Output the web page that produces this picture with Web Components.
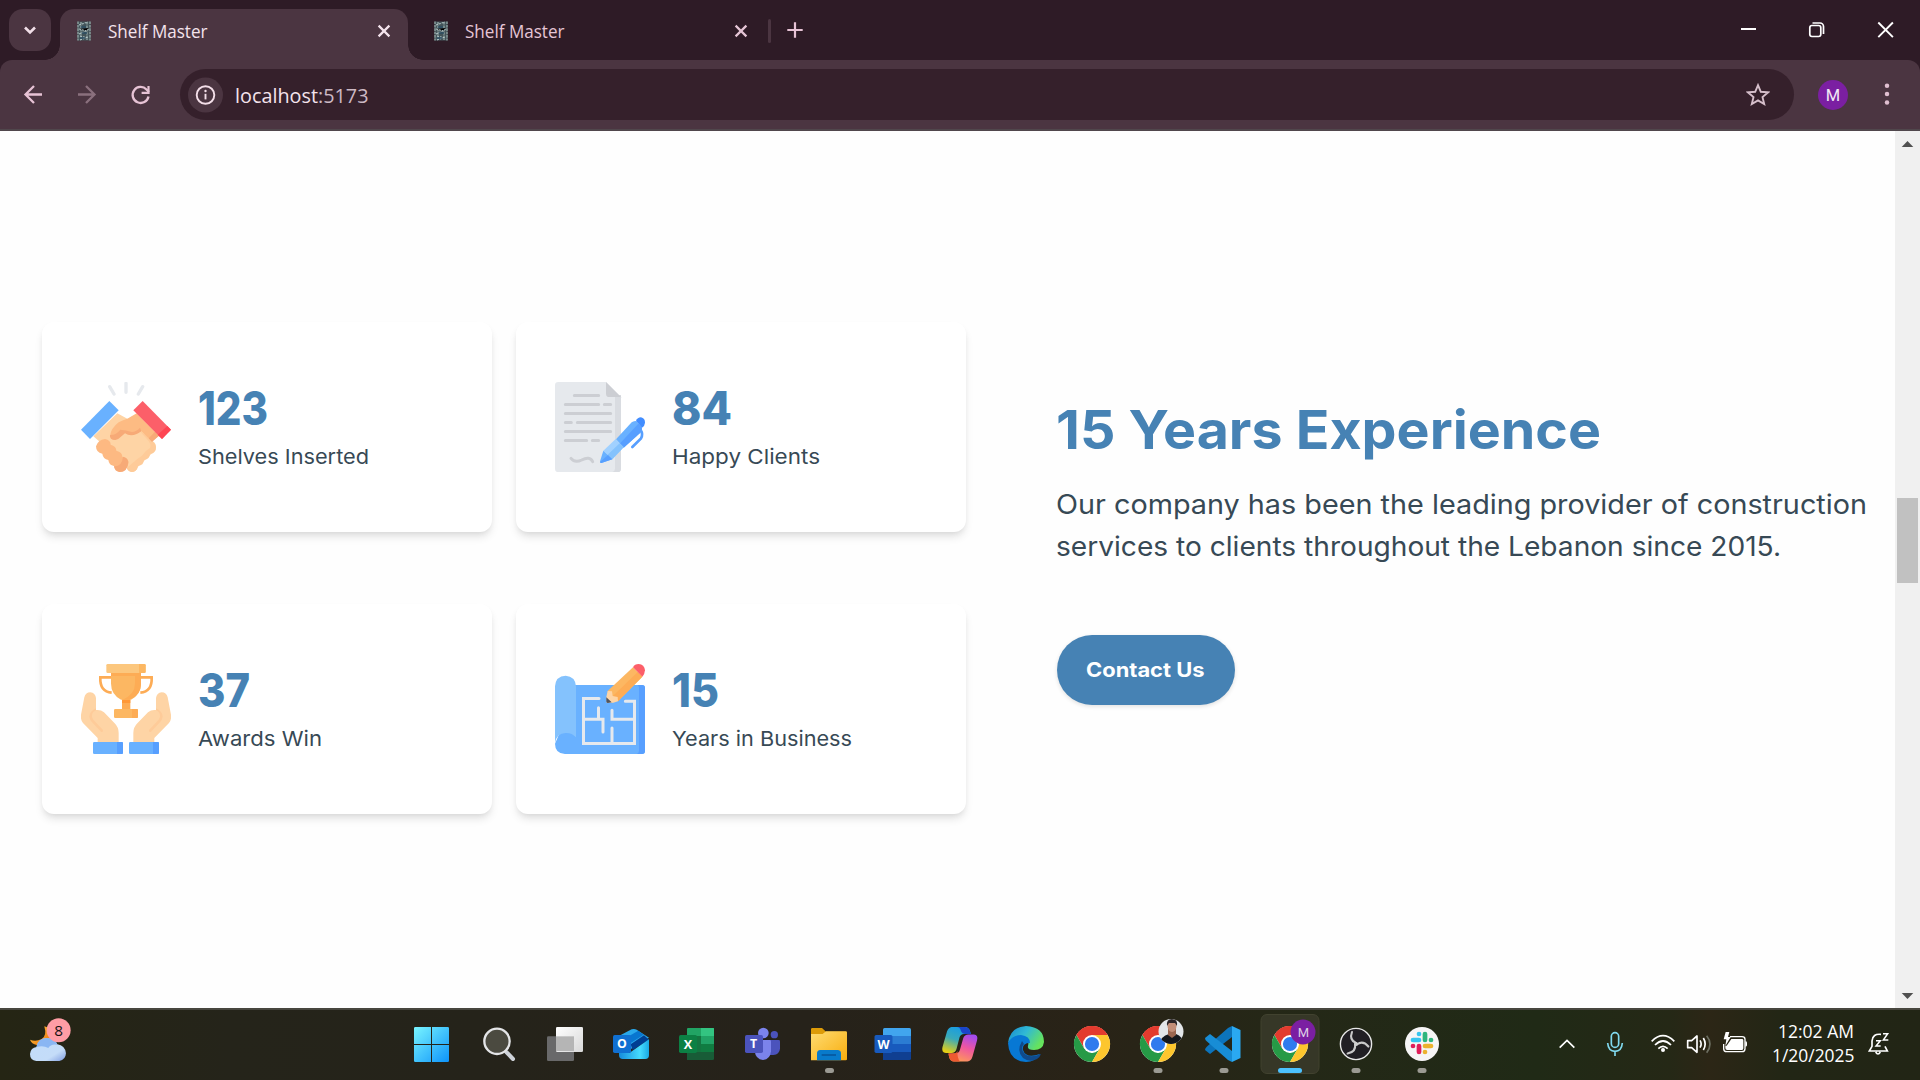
<!DOCTYPE html>
<html lang="en">
<head>
<meta charset="utf-8">
<title>Shelf Master</title>
<style>
html,body{margin:0;height:100%;overflow:hidden}
body{font-family:"Open Sans","Noto Sans",sans-serif;background:#fff}
</style>
</head>
<body>
<desktop-screen></desktop-screen>
<script>
const CHROME = `<circle cx="33" cy="36" r="18" fill="#fff"/>
<path d="M33 36 17.4 27A18 18 0 0 1 48.6 27Z" fill="#e33b2e"/><path d="M17.4 27A18 18 0 0 1 48.6 27H33L25.2 40.5Z" fill="#e33b2e"/>
<path d="M17.4 27A18 18 0 0 0 33 54L40.8 40.5 33 45 25.2 40.5Z" fill="#269a46"/>
<path d="M48.6 27A18 18 0 0 1 33 54L40.8 40.5 41 32 33 27Z" fill="#fdc62e"/>
<circle cx="33" cy="36" r="9" fill="#fff"/><circle cx="33" cy="36" r="7.1" fill="#2f7bee"/>`;
const DOT = '<rect x="28.5" y="60" width="9" height="5" rx="2.5" fill="#9b9a93"/>';
const ICONS = {
 chevdown:['0 0 42 42','<path d="m16 18.5 5 5 5-5" fill="none" stroke="#f1dfe8" stroke-width="2.6"/>'],
 shelf:['0 0 16 22','<rect x="1.5" y="1.5" width="13" height="19" fill="#435459"/><path d="M2 1.5v19M14 1.5v19M5 2v18M11 2v18" stroke="#8da09f" stroke-width="1.4" stroke-dasharray="2.6 .8"/><path d="m3 5 9-3M3 9l8 2 2-3M3 14l9-4M4 16l8 2M4 20l8-3" stroke="#b2c5c6" stroke-width="1.1" stroke-dasharray="2 1"/><path d="M5 7h5M6 13h5M4 18h5" stroke="#2d4d63" stroke-width="1.4"/>'],
 x:['0 0 18 18','<path d="m3.6 3.6 10.8 10.8m0-10.8L3.6 14.4" stroke="currentColor" stroke-width="2.2"/>'],
 plus:['0 0 18 18','<path d="M9 1.3v15.4M1.3 9h15.4" stroke="#e7c3d5" stroke-width="2.2"/>'],
 min:['0 0 69 60','<path d="M28 29h15" stroke="#fff" stroke-width="2"/>'],
 restore:['0 0 69 60','<g fill="none" stroke="#fff" stroke-width="1.7"><rect x="27.800" y="25.5" width="11" height="11" rx="2.2"/><path d="M30.500 23h7.5a3.5 3.5 0 0 1 3.5 3.5V34"/></g>'],
 close:['0 0 69 60','<path d="m27.3 22.5 14.6 14.6m0-14.6L27.3 37.1" stroke="#fff" stroke-width="1.9"/>'],
 back:['0 0 54 51','<path d="M42 25.5H26M34 17l-8.5 8.500L34 34" fill="none" stroke="#e7c3d5" stroke-width="2.3"/>'],
 fwd:['0 0 54 51','<path d="M24 25.500h16M32 17l8.500 8.500L32 34" fill="none" stroke="#8a707d" stroke-width="2.300"/>'],
 reload:['0 0 54 51','<path d="M40.5 27.500a8 8 0 1 1-2-7l2.500 2.500" fill="none" stroke="#e7c3d5" stroke-width="2.300"/><path d="M41.600 17v8h-8v-2.200h5.800V17z" fill="#e7c3d5"/>'],
 info:['0 0 36 36','<circle cx="18.500" cy="18" r="17.500" fill="#4b3541"/><circle cx="18.500" cy="18" r="8.800" fill="none" stroke="#f4dfe9" stroke-width="1.900"/><path d="M18.500 16.800v5.600" stroke="#f4dfe9" stroke-width="1.900"/><circle cx="18.500" cy="14" r="1.200" fill="#f4dfe9"/>'],
 star:['0 0 24 24','<path d="m12 2.200 2.800 6.600 7.200.600-5.500 4.700 1.700 7L12 17.400 5.800 21.100l1.700-7L2 9.400l7.200-.6z" fill="none" stroke="#d6bfcb" stroke-width="1.900"/>'],
 dots:['0 0 24 24','<g fill="#e0bfd0"><circle cx="12" cy="3.800" r="2.250"/><circle cx="12" cy="12" r="2.250"/><circle cx="12" cy="20.400" r="2.250"/></g>'],
 up:['0 0 25 26','<path d="m12.500 10 5.800 6H6.700z" fill="#505050"/>'],
 down:['0 0 25 26','<path d="m12.500 17 5.800-6H6.700z" fill="#505050"/>'],
 hands:['123 216 270 270',`<g stroke="#e6e9ed" stroke-width="10" stroke-linecap="round"><path d="m209 230 13 22M258 220v27M308 230l-13 22"/></g>
<path d="M232 310 160 379 180 396 258 466Q262 486 276 486 290 484 294 470L346 420Q352 398 335 392L300 340 262 326Z" fill="#fed4a5"/>
<path d="M298 362Q318 372 334 394 352 402 347 420 342 432 330 431 330 447 312 450 311 466 294 468 290 486 275 486 264 484 260 474L284 454Q292 446 306 437 318 420 330 414 336 402 320 386Z" fill="#fecb99"/>
<path d="M290 310 357 377 335 394 303 362Q282 382 250 366L234 385Q218 394 210 378 212 356 236 337 250 330 262 326Z" fill="#fdbb83"/>
<path d="M210 375Q208 390 226 390 234 390 241 382L255 370Q276 384 304 364L300 353Q290 365 275 366 258 360 241 359 228 376 210 375M345 365 357 377 336 396 326 385Z" fill="#f7aa77"/>
<path d="M168 409Q174 389 195 387 212 390 212 404 229 409 229 422 247 427 247 440 268 445 265 461 258 486 239 486 224 484 222 468 207 466 205 450 189 447 187 431 168 428 168 409Z" fill="#fdb982"/>
<path d="M265 456Q263 486 239 486 224 484 222 469 246 470 249 440 263 443 265 456Z" fill="#f7aa77"/>
<path d="m208 273 28 28-86 86-27-28z" fill="#69b1ff"/><path d="m308 273 85 86-27 28-86-86z" fill="#fc5f69"/><path d="m382 348 11 11-27 28-13-13z" fill="#fe4553"/>`],
 paper:['165 216 270 270',`<path d="M175 216h143l45 46v214q0 10-10 10H175q-10 0-10-10V226q0-10 10-10" fill="#e6e9ed"/><path d="M345 255h18v221q0 10-10 10h-16q8-3 8-10z" fill="#d9dce1"/><path d="m318 216 45 45h-35q-10 0-10-10z" fill="#ccced3"/>
<path d="M223 256.500h73M196 283.500h100M313 283.500h19M196 310.500h136M196 337.500h18M232 337.500h100M196 364.500h136M196 391.500h64M277 391.500h19M213 445q12 15 32 5 24-13 33 5" stroke="#ccced3" stroke-width="9" stroke-linecap="round" fill="none"/>
<path d="m422 360q8 13 1 25l-26 26" fill="none" stroke="#579fff" stroke-width="8" stroke-linecap="round"/>
<path d="m395 337q7-4 13-4l18 20q0 9-5 15l-50 45-23-25z" fill="#69b1ff"/><path d="m415 341 11 12q0 9-5 15l-50 45-12-12z" fill="#579fff"/><path d="m408 333q4-11 15-11 12 3 12 16-1 10-9 15z" fill="#428dff"/>
<path d="m347 387 24 25-34 36-27-26z" fill="#a1d1ff"/><path d="m359 400 12 12-34 36-14-14z" fill="#84c2fd"/><path d="m310 422 27 26-33 11q-6-1-3-8z" fill="#69b1ff"/><path d="m324 435 13 13-33 11q-4 0-4-3z" fill="#579fff"/>`],
 trophy:['123 192 270 270',`<path d="M214 232h-33q-2 43 34 46m87-46h33q2 43-34 46" fill="none" stroke="#fdac55" stroke-width="8"/><path d="M246 290h25v40h-25z" fill="#fdac55"/><path d="M246 300h25v9h-25z" fill="#ff9838"/>
<path d="M213 215h90v35q0 34-30 49h-30q-30-15-30-49z" fill="#fcb762"/><path d="M285 215h18v35q0 37-36 49h-19q37-15 37-49z" fill="#fdac55"/><path d="M213 218h90v10h-90z" fill="#fdac55"/>
<rect x="199" y="192" width="118" height="27" rx="4" fill="#fcc77e"/><path d="M297 192h16q4 0 4 4v19q0 4-4 4h-16z" fill="#fcb762"/><rect x="222" y="327" width="72" height="27" rx="4" fill="#fcb762"/><path d="M276 327h14q4 0 4 4v19q0 4-4 4h-14z" fill="#fdac55"/>
<g id="h"><path d="M133 292q4-15 18-15 15 2 17 17v36q14-2 24 7l32 33q12 12 12 29v28h-63v-13l-44-45q-8-9-6-25z" fill="#fed4a5"/><path d="M168 325q-20 10-20 25 2 11 8 17l27 28q7 3 6-5l-29-31q-12-18 8-29z" fill="#fecb99"/></g><use href="#h" transform="matrix(-1 0 0 1 516 0)"/>
<rect x="159" y="426" width="90" height="36" rx="4" fill="#69b1ff"/><rect x="267" y="426" width="90" height="36" rx="4" fill="#69b1ff"/><path d="M231 426h14q4 0 4 4v28q0 4-4 4h-14zM339 426h14q4 0 4 4v28q0 4-4 4h-14z" fill="#579fff"/>`],
 plan:['165 192 270 270',`<path d="M215 255h211q9 0 9 9v189q0 9-9 9H195q-30-2-30-31l30-70z" fill="#69b1ff"/><path d="M413 255h13q9 0 9 9v189q0 9-9 9h-16q7-3 7-10V263q0-5-4-8" fill="#579fff"/>
<path d="M165 259q2-31 32-32 29 2 31 32v153q-13-14-31-13-27 0-32 30z" fill="#84c2fd"/>
<path d="M297 295.500H250.500v135h153V304H376M250.500 358h58.500v38M295.500 323v35M336 331v27h66M336 384v46" fill="none" stroke="#e6e9ed" stroke-width="9" stroke-linecap="round"/>
<path d="m399 202 28 28-73 74-32-30z" fill="#fcb762"/><path d="m413 216 14 14-73 74-16-15z" fill="#fdac55"/><path d="m399 202q5-10 17-10 17 1 19 19-1 12-8 19z" fill="#fc5f69"/><path d="m323 273 13 1 2 14 15 3 1 13-14 4-20 1-1-18z" fill="#fed4a5"/><path d="m319 292 16 15-12 2q-4 0-4-5z" fill="#51555f"/>`],
 weather:['66 24 160 216',`<defs><linearGradient id="m" y2="1"><stop stop-color="#ffc83d"/><stop offset="1" stop-color="#ec7211"/></linearGradient><linearGradient id="c" y2="1"><stop stop-color="#c2dcfa"/><stop offset=".7" stop-color="#c4dcf8"/><stop offset="1" stop-color="#7f9ce0"/></linearGradient></defs><path d="M133 79q9 30-9 39-18 8-34 1 5 13 20 16h40V85z" fill="url(#m)"/><path d="M109 183q-19-2-19-21 2-19 20-21 5-26 32-27 23 2 30 19 23 3 26 27-1 20-20 23z" fill="url(#c)"/><path d="M109 141q4-27 33-27 24 1 30 20-20-3-27 10-15-9-36-3" fill="#8ab6f3"/><circle cx="176" cy="91" r="36" fill="#ff9da5"/><text x="176" y="107" text-anchor="middle" font-size="46" font-family="Open Sans" fill="#171313">8</text>`],
 start:['57 9 198 216','<defs><linearGradient id="g" x2="1" y2="1" gradientUnits="userSpaceOnUse" gradientTransform="translate(102 66) scale(105)"><stop stop-color="#79f5ff"/><stop offset="1" stop-color="#0d93fa"/></linearGradient></defs><path d="M106 66h47v51h-51V70q0-4 4-4m50 0h47q4 0 4 4v47h-51zm-54 54h51v51h-47q-4 0-4-4zm54 0h51v47q0 4-4 4h-47z" fill="url(#g)"/>'],
 search:['255 9 198 216','<path d="m379 141 20 21" stroke="#ced2d8" stroke-width="12" stroke-linecap="round"/><circle cx="351" cy="109" r="38" fill="#4b4a40" stroke="#e4e5e7" stroke-width="7"/>'],
 view:['453 9 198 216','<defs><linearGradient id="v" x2="1" y2="1"><stop stop-color="#fff"/><stop offset="1" stop-color="#d8d8d8"/></linearGradient></defs><rect x="501" y="94" width="81" height="74" rx="4" fill="#69696a"/><rect x="528" y="66" width="81" height="75" rx="4" fill="url(#v)"/><path d="M528 94h54v44h-54z" fill="#b5b5b5"/>'],
 outlook:['651 9 198 216','<defs><linearGradient id="o" x2="1"><stop stop-color="#158bdc"/><stop offset=".7" stop-color="#46dcff"/><stop offset="1" stop-color="#19a9e4"/></linearGradient></defs><path d="m718 92 37-19q8-3 15 1l37 24-70 44z" fill="#29a8ec"/><path d="m733 101 42-24 16 12-40 26z" fill="#0876d0"/><path d="m752 118 40-27 15 13-49 31z" fill="#003e92"/><path d="m807 103v48q0 11-11 11h-68q-11 0-11-11v-8h32z" fill="url(#o)"/><rect x="699" y="90" width="54" height="54" rx="5" fill="#1070d2"/><text x="726" y="130" text-anchor="middle" font-family="Open Sans" font-weight="700" font-size="37" fill="#fff">O</text>'],
 excel:['849 9 198 216','<path d="M924 69h78v24h-81V72q0-3 3-3" fill="#21a464"/><path d="M963 69h36q3 0 3 3v21h-39z" fill="#33c481"/><path d="M921 93h81v24h-81z" fill="#21a366"/><path d="M921 117h81v24h-81z" fill="#107c41"/><path d="M921 141h81v20q0 4-4 4h-77z" fill="#185c37"/><path d="M921 93h42v48h-42z" fill="#147540"/><rect x="897" y="90" width="54" height="54" rx="5" fill="#0c8044"/><text x="924" y="131" text-anchor="middle" font-family="Open Sans" font-weight="700" font-size="38" fill="#fff">X</text>'],
 teams:['1047 9 198 216','<circle cx="1183" cy="89" r="11" fill="#4b53bc"/><path d="M1165 105h31q4 0 4 4v22q-2 18-20 19h-15z" fill="#4b53bc"/><circle cx="1150" cy="84" r="16" fill="#7b83eb"/><path d="M1124 105h45q4 0 4 4v30q-2 24-24 26-22-2-25-26z" fill="#7b83eb"/><rect x="1095" y="90" width="54" height="54" rx="5" fill="#4b53bc"/><text x="1121" y="130" text-anchor="middle" font-family="Open Sans" font-weight="700" font-size="37" fill="#fff">T</text>'],
 files:['1245 9 198 216','<defs><linearGradient id="f" x2="1" y2="1"><stop stop-color="#ffdc72"/><stop offset="1" stop-color="#f8ad0d"/></linearGradient></defs><path d="M1297 69h29l12 11h59q4 0 4 4v20h-108V73q0-4 4-4" fill="#dd9b08"/><path d="M1293 87h35l10-8h59q4 0 4 4v80q0 3-4 3h-104z" fill="url(#f)"/><path d="M1311 166v-20q0-11 10-11h52q10 0 10 11v20z" fill="#087acb"/><path d="M1325 150h43" stroke="#074f93" stroke-width="4"/><rect x="1335" y="189" width="27" height="15" rx="7.500" fill="#9b9a93"/>'],
 word:['1.5 0 66 72','<path d="M25 20h25q1.500 0 1.500 1.500V28h-28v-6.500Q23.500 20 25 20" fill="#41a5ee"/><path d="M23.500 28h28v8h-28z" fill="#2b7cd3"/><path d="M23.500 36h28v8h-28z" fill="#185abd"/><path d="M23.500 44h28v6.500q0 1.500-1.500 1.500H23.500z" fill="#103f91"/><rect x="15" y="27" width="18" height="18" rx="1.700" fill="#185abd"/><text x="24" y="40.500" text-anchor="middle" font-family="Open Sans" font-weight="700" font-size="12.500" fill="#fff">W</text>'],
 copilot:['0 0 66 72','<defs><linearGradient id="a" x1=".7" x2=".3" y2="1"><stop stop-color="#159be7"/><stop offset=".5" stop-color="#39aaba"/><stop offset="1" stop-color="#e4ce16"/></linearGradient><linearGradient id="b" x1=".7" x2=".3" y2="1"><stop stop-color="#a24bef"/><stop offset=".45" stop-color="#ef56a0"/><stop offset="1" stop-color="#ff9d54"/></linearGradient></defs><path d="M24.500 19H38q3.500 0 4.800 3.500L44 26h-7q-3.500 0-4.500 3.500L29.500 41q-1.200 4-5 4H19q-5-.5-3.500-6L20 23.500q1.300-4 4.500-4.500z" fill="url(#a)"/><path d="M32 19h6q3.500 0 4.800 3.500L44 26h-5.500q-3.500 0-4.500-3-1-4-4-4z" fill="#1b45c9"/><path d="M47 27q4.500.5 3 6l-4.500 16q-1.300 4.500-5 5H27q-3.500 0-4.800-4L21.500 46H28q4 0 5-4l3.300-11.500Q37.500 27 41.500 27z" fill="url(#b)" transform="translate(0 -.5)"/><path d="M21.500 45.500H26q3.500 0 4.500-2.500-.5 7 2.500 10.500h-6q-3.500 0-4.800-4z" fill="#ee5931"/>'],
 edge:['0 0 66 72','<defs><linearGradient id="e" x2="1" y2=".5"><stop stop-color="#1687cd"/><stop offset=".5" stop-color="#30b9d5"/><stop offset="1" stop-color="#66e35d"/></linearGradient></defs><path d="M15 35Q17 19 33 18 51 19 51 34q-1 8-10 8-7 0-6-4 2-9-7-9-9 0-13 6" fill="url(#e)"/><path d="M15 35q4-8 13-8 9 1 9 8-8 0-7 7 3 9 17 4-5 8-14 8-17-1-18-19" fill="#0778d4"/><path d="M29 33q-6 10 1 17 7 5 14 1 3-2 4-5-12 5-17-1-4-5 0-9z" fill="#104a8b"/>'],
 chrome:['0 0 66 72',CHROME],
 chromea:['0 0 66 72',CHROME+DOT+'<defs><clipPath id="p"><circle cx="46" cy="23.500" r="12.500"/></clipPath></defs><g clip-path="url(#p)"><path d="M30 8h32v34H30z" fill="#e3e6e9"/><path d="M34 39q0-10 10-13h7q8 3 8 13z" fill="#15181d"/><path d="M43 19h8v8l-4 3-4-3z" fill="#9b6650"/><ellipse cx="47" cy="18" rx="4.500" ry="6" fill="#c28e78"/><path d="M42 18q-1-7 5-7t5 7l-2-3h-6z" fill="#292326"/></g>'],
 code:['0 0 66 72','<path d="M41 18v11L19 46l-5-4q0-2 2-3.500L37 20z" fill="#0c74bc"/><path d="M41 54V43L19 26l-5 4q0 2 2 3.500L37 52z" fill="#188dd6"/><path d="m41 18 8.500 4v28L41 54z" fill="#2aa9f2"/>'+DOT],
 chromem:['0 0 66 72','<rect x="4" y="6.500" width="58" height="59" rx="6" fill="#363727" stroke="#41422f"/>'+CHROME+'<circle cx="46" cy="24" r="12.500" fill="#7b1fa2"/><text x="46.500" y="28.500" text-anchor="middle" font-family="Roboto" font-size="13" fill="#ded0e5">M</text><rect x="21" y="60" width="24" height="5" rx="2.500" fill="#4cc2ff"/>'],
 obs:['0 0 66 72','<circle cx="33" cy="36" r="15.600" fill="#211f24" stroke="#e8e8e8" stroke-width="1.400"/><g fill="none" stroke="#c9c9c9" stroke-width="2.100" stroke-linecap="round"><g id="s"><path d="M33 35q-7-3-4-11"/></g><use href="#s" transform="rotate(120 33 36)"/><use href="#s" transform="rotate(240 33 36)"/></g><circle cx="33" cy="36" r="2" fill="#d0d0d0"/>'+DOT],
 slack:['0 0 66 72','<circle cx="33" cy="36" r="17" fill="#f6f5f6"/><g stroke-width="4.700" stroke-linecap="round"><path d="M30 26v.01M24 32h6" stroke="#36c5f0"/><path d="M36 26v6M42 32v.01" stroke="#2eb67d"/><path d="M36 38h6M36 44v.01" stroke="#ecb22e"/><path d="M30 38v6M24 38v.01" stroke="#e01e5a"/></g>'+DOT],
 tchev:['69 24 144 216','<path d="m119 143 22-22 22 22" fill="none" stroke="#fff" stroke-width="5"/>'],
 mic:['213 24 144 216','<g fill="none" stroke="#80d9ee" stroke-width="5"><rect x="274" y="98" width="22" height="44" rx="11"/><path d="M263 129q2 25 22 25t22-25M285 154v14"/></g>'],
 wifi:['357 24 126 216','<g fill="none" stroke="#fff" stroke-width="5"><path d="M395 124q34-34 68 0M405 135q24-24 48 0M415 146q14-14 28 0"/></g><circle cx="429" cy="150" r="6" fill="#fff"/>'],
 sound:['483 24 105 216','<g fill="none" stroke="#fff" stroke-width="5"><path d="M503 122h12l16-14v49l-16-14h-12z" stroke-linejoin="round"/><path d="M540 121q7 11 0 22M550 114q11 18 0 36"/><path d="M560 107q20 25 0 51" stroke="#6d6f62"/></g>'],
 battery:['588 24 117 216','<path d="M630 110h36q9 0 9 8v28q0 9-9 9h-46q-9 0-9-9v-14" fill="none" stroke="#fff" stroke-width="4"/><path d="M634 117h32q4 0 4 4v24q0 5-4 5h-44q-6 0-6-6v-7h4zM676 124q5 0 5 4v8q0 4-5 4z" fill="#fff"/><path d="m617 96-6 22h8l-3 20 16-27h-8l4-15z" fill="#fff"/>'],
 bell:['1020 24 126 216','<path d="M1083 103q-25-3-27 20v16l-8 14h54l-7-14M1067 156q7 12 14 0" fill="none" stroke="#fff" stroke-width="5"/><path d="M1068 122h13l-13 16h14M1089 101h14l-13 19h15" fill="none" stroke="#fff" stroke-width="4.500"/>']
};
const define = (name, html) => customElements.define(name, class extends HTMLElement {
  connectedCallback(){
    if(this.shadowRoot) return;
    const t = document.createElement('template');
    t.innerHTML = html(this);
    this.attachShadow({mode:'open'}).append(t.content.cloneNode(true));
  }
});

define('ui-icon', el => `<style>:host{display:block;flex:none;width:${el.getAttribute('w')}px;height:${el.getAttribute('h')||el.getAttribute('w')}px}svg{display:block;width:100%;height:100%}</style><svg viewBox="${ICONS[el.getAttribute('name')][0]}">${ICONS[el.getAttribute('name')][1]}</svg>`);

define('browser-tab', () => `<style>
:host{display:flex;align-items:center;box-sizing:border-box;width:348px;height:51px;padding:0 15px 17px 16px;color:#e5c5d5;position:relative}
:host([active]){background:#4b3541;color:#f4e3ec;border-radius:14px 14px 0 0}
:host([active])::before,:host([active])::after{content:"";position:absolute;bottom:0;width:15px;height:15px}
:host([active])::before{left:-15px;background:radial-gradient(circle at 0 0,transparent 14.500px,#4b3541 15px)}
:host([active])::after{right:-15px;background:radial-gradient(circle at 100% 0,transparent 14.500px,#4b3541 15px)}
.t{flex:1;font-size:18px;line-height:24px;padding:1.500px 0 0 16px;margin-top:8px}
ui-icon[name=shelf]{margin-top:10px}ui-icon[name=x]{margin-top:9px}
</style><ui-icon name="shelf" w="16" h="22"></ui-icon><div class="t"><fit-text w="99.500"><slot></slot></fit-text></div><ui-icon name="x" w="18"></ui-icon>`);

define('tab-strip', () => `<style>
:host{display:flex;height:60px;box-sizing:border-box;background:#2e1b26}
.list{width:42px;height:42px;margin:9px 9px 0;border-radius:14px;background:#4b3541}
browser-tab{margin-top:9px}browser-tab+browser-tab{margin-left:9px}
i{width:3px;height:24px;margin:19px 15px 0 3px;border-radius:2px;background:#4b3541}
.plus{margin-top:21px}.gap{flex:1}
</style><div class="list"><ui-icon name="chevdown" w="42"></ui-icon></div>
<browser-tab active>Shelf Master</browser-tab><browser-tab>Shelf Master</browser-tab><i></i><ui-icon class="plus" name="plus" w="18"></ui-icon><div class="gap"></div>
<ui-icon name="min" w="69" h="60"></ui-icon><ui-icon name="restore" w="69" h="60"></ui-icon><ui-icon name="close" w="69" h="60"></ui-icon>`);

define('tool-bar', () => `<style>
:host{display:block;background:#2e1b26;height:71px}
.bar{display:flex;box-sizing:border-box;height:71px;padding:9px 21px 0 0;background:#4b3541;border-bottom:2px solid #50474c;border-radius:12px 12px 0 0}
.omni{display:flex;align-items:center;box-sizing:border-box;flex:1;height:51px;margin-left:18px;padding:0 24px 0 7px;border-radius:26px;background:#35202b;font-size:20.500px;color:#cdb9c4}
.url{flex:1;padding-left:12px;line-height:28px}b{font-weight:400;color:#f4e3ec}
.me{width:30px;height:30px;margin:11px 27px 0 24px;border-radius:50%;background:#7b1fa2;color:#f2e8f5;font:16.500px/31px Roboto,sans-serif;text-align:center}
.dots{margin-top:13px}
</style><div class="bar"><ui-icon name="back" w="54" h="51"></ui-icon><ui-icon name="fwd" w="54" h="51"></ui-icon><ui-icon name="reload" w="54" h="51"></ui-icon>
<div class="omni"><ui-icon name="info" w="36"></ui-icon><div class="url"><fit-text w="133.500"><b>localhost</b>:5173</fit-text></div><ui-icon name="star" w="24"></ui-icon></div>
<div class="me">M</div><ui-icon class="dots" name="dots" w="24"></ui-icon></div>`);

define('stat-card', el => `<style>
:host{display:flex;align-items:flex-start;box-sizing:border-box;height:210px;padding:60px 39px;border-radius:12px;background:#fff;box-shadow:0 6px 9px -1.500px rgba(0,0,0,.1),0 3px 6px -3px rgba(0,0,0,.1)}
.txt{padding:0 0 0 27px}
.n{display:block;height:50px;line-height:50px;font-size:46px;font-weight:800;color:#4682b4;padding-top:.5px}
.l{display:block;height:32px;line-height:32px;font-size:20.500px;color:#374955;padding-top:8.500px}
</style><ui-icon name="${el.getAttribute('icon')}" w="90"></ui-icon><div class="txt"><div class="n"><fit-text w="${el.getAttribute('nw')}">${el.getAttribute('value')}</fit-text></div><div class="l"><fit-text w="${el.getAttribute('lw')}"><slot></slot></fit-text></div></div>`);

define('pill-button', () => `<style>:host{display:flex;justify-content:center;align-items:center;width:178px;height:70px;margin-left:.5px;border-radius:35px;background:#4682b4;color:#fff;font-size:20px;font-weight:700;box-shadow:0 1.500px 4px rgba(0,0,0,.12)}</style><fit-text w="118.500"><slot></slot></fit-text>`);

define('stats-page', () => `<style>
:host{display:flex;flex:1;background:#fefefe;font-family:Inter,sans-serif;box-sizing:border-box;padding:191px 0 0 42px}
.cards{display:grid;grid-template-columns:450px 450px;gap:72px 24px;align-content:start}
.copy{padding:81px 0 0 90px;color:#374955}
h2{margin:0;font-size:54px;line-height:54px;font-weight:700;color:#4682b4}
p{margin:27px 0 67px;font-size:27px;line-height:42px}p fit-text{display:block}
</style><div class="cards">
<stat-card icon="hands" value="123" nw="70" lw="171">Shelves Inserted</stat-card>
<stat-card icon="paper" value="84" nw="60" lw="148">Happy Clients</stat-card>
<stat-card icon="trophy" value="37" nw="52" lw="124">Awards Win</stat-card>
<stat-card icon="plan" value="15" nw="47" lw="180">Years in Business</stat-card></div>
<div class="copy"><h2><fit-text w="545">15 Years Experience</fit-text></h2>
<p><fit-text w="811">Our company has been the leading provider of construction</fit-text><fit-text w="725">services to clients throughout the Lebanon since 2015.</fit-text></p>
<pill-button>Contact Us</pill-button></div>`);

define('scroll-bar', () => `<style>:host{display:flex;flex-direction:column;width:25px;background:#f0f0f0;align-items:center}i{width:21px;height:85px;margin-top:341px;background:#c1c1c1}.g{flex:1}</style><ui-icon name="up" w="25" h="26"></ui-icon><i></i><div class="g"></div><ui-icon name="down" w="25" h="26"></ui-icon>`);

define('task-bar', () => `<style>
:host{display:flex;height:72px;box-sizing:border-box;color:#fff;background:linear-gradient(#48473f 2px,transparent 2px),linear-gradient(90deg,#252514,#25241a 12%,#25231a 25%,#26221a 42%,#292317 57%,#242817 68%,#202a16 80%,#252816 87%,#2c2616 89%,#222615 93%,#222515)}
.w{margin:0 323.700px 0 22px}.apps{display:flex}.g{flex:1}
.clock{width:99px;padding:11px 6px 0 0;font-size:17.500px;line-height:24px;text-align:right}
.clock div{display:flex;justify-content:flex-end;height:24px}.bell{margin-right:18px}
</style><ui-icon class="w" name="weather" w="53.300" h="72"></ui-icon><div class="apps">${['start','search','view','outlook','excel','teams','files','word','copilot','edge','chrome','chromea','code','chromem','obs','slack'].map(n=>`<ui-icon name="${n}" w="66" h="72"></ui-icon>`).join('')}</div><div class="g"></div>
<ui-icon name="tchev" w="48" h="72"></ui-icon><ui-icon name="mic" w="48" h="72"></ui-icon><ui-icon name="wifi" w="42" h="72"></ui-icon><ui-icon name="sound" w="35" h="72"></ui-icon><ui-icon name="battery" w="39" h="72"></ui-icon>
<div class="clock"><div><fit-text w="76">12:02 AM</fit-text></div><div><fit-text w="82.500">1/20/2025</fit-text></div></div><ui-icon class="bell" name="bell" w="42" h="72"></ui-icon>`);

define('desktop-screen', () => `<style>:host{display:flex;flex-direction:column;width:1920px;height:1080px}.view{display:flex;height:877px}</style><tab-strip></tab-strip><tool-bar></tool-bar><div class="view"><stats-page></stats-page><scroll-bar></scroll-bar></div><task-bar></task-bar>`);

// Single-line label whose glyphs widen or narrow so the line spans a given width.
customElements.define('fit-text', class extends HTMLElement {
  connectedCallback(){
    if(this.shadowRoot) return;
    const w = +this.getAttribute('w');
    this.attachShadow({mode:'open'}).innerHTML = `<style>:host{display:inline-block;width:${w}px;white-space:nowrap;text-align:left}span{display:inline-block;transform-origin:0 50%}</style><span><slot></slot></span>`;
    const span = this.shadowRoot.querySelector('span');
    span.style.transform = `scaleX(${w / span.getBoundingClientRect().width})`;
  }
});
</script>
</body>
</html>
